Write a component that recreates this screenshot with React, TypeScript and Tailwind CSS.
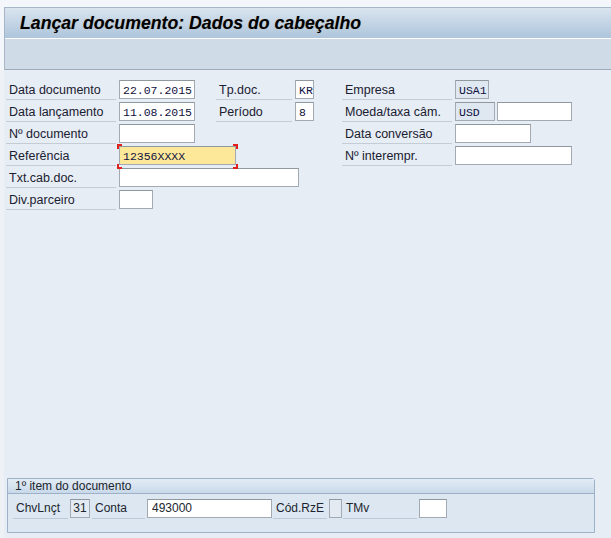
import React from "react";

type FieldProps = {
  w: number;
  value?: string;
  tone?: "white" | "blue" | "yellow" | "grey";
  mono?: boolean;
};

const widthClass: Record<number, string> = {
  19: "w-[19px]",
  34: "w-[34px]",
  40: "w-[40px]",
  75: "w-[75px]",
  76: "w-[76px]",
  117: "w-[117px]",
  180: "w-[180px]",
};

function Field({ w, value = "", tone = "white", mono = true }: FieldProps) {
  const bg =
    tone === "blue"
      ? "bg-[#dfe8f1]"
      : tone === "yellow"
      ? "bg-[#fde89a]"
      : tone === "grey"
      ? "bg-[#e3eaf1]"
      : "bg-white";
  return (
    <div
      className={[
        "mt-[1px] h-[19px] shrink-0 overflow-hidden border border-[#a3aab3] border-t-[#8f979f] pl-[3px] pt-[1px] text-[#101040] leading-[17px]",
        widthClass[w],
        bg,
        mono
          ? "font-['Liberation_Mono',monospace] text-[11.5px]"
          : "text-[12px]",
      ].join(" ")}
    >
      {value}
    </div>
  );
}

function Label({ text, w }: { text: string; w: "lg" | "sm" }) {
  return (
    <div
      className={[
        "mr-[3px] h-[21px] shrink-0 border-b border-[#c4ccd5] pl-[3px] pt-[2px] text-[12.5px] leading-[18px] text-[#1b2030] whitespace-nowrap",
        w === "lg" ? "w-[110px]" : "w-[76px]",
      ].join(" ")}
    >
      {text}
    </div>
  );
}

function Corner({ pos }: { pos: string }) {
  return <span className={`absolute h-[5px] w-[5px] border-[#e0201a] ${pos}`} />;
}

function GroupLabel({ text, className }: { text: string; className: string }) {
  return (
    <div
      className={`mr-[2px] h-[21px] shrink-0 border-b border-[#bccad8] pl-[3px] pt-[1px] text-[12px] leading-[19px] text-[#20252d] ${className}`}
    >
      {text}
    </div>
  );
}

function GroupField({ className, value = "" }: { className: string; value?: string }) {
  return (
    <div
      className={`mt-[1px] h-[19px] shrink-0 border border-[#a3aab3] border-t-[#8f979f] text-[12px] leading-[17px] text-[#20252d] ${className}`}
    >
      {value}
    </div>
  );
}

export default function App() {
  return (
    <div className="flex h-[538px] w-[611px] flex-col overflow-hidden bg-[#f3f6fa] font-['Liberation_Sans',Arial,sans-serif]">
      <div className="h-[7px] shrink-0" />
      <div className="ml-[4px] shrink-0 border-l border-t border-[#a8b7c8]">
        <div className="flex h-[30px] items-center bg-gradient-to-b from-[#d9e4ef] to-[#aec5db] pl-[15px]">
          <h1 className="text-[17.7px] font-bold italic text-black [text-shadow:0_0_1px_rgba(120,70,0,0.35)]">
            Lançar documento: Dados do cabeçalho
          </h1>
        </div>
        <div className="h-[32px] border-t border-white border-b border-b-[#9eaab7] bg-[#cfdbe6]" />
      </div>

      <div className="flex flex-1 flex-col border-l-[4px] border-[#eef2f7] bg-[#e6edf5] pl-[2px] pt-[9px]">
        <div className="flex h-[22px]">
          <Label text="Data documento" w="lg" />
          <Field w={76} value="22.07.2015" />
          <div className="w-[21px] shrink-0" />
          <Label text="Tp.doc." w="sm" />
          <Field w={19} value="KR" />
          <div className="w-[28px] shrink-0" />
          <Label text="Empresa" w="lg" />
          <Field w={34} value="USA1" tone="blue" />
        </div>
        <div className="flex h-[22px]">
          <Label text="Data lançamento" w="lg" />
          <Field w={76} value="11.08.2015" />
          <div className="w-[21px] shrink-0" />
          <Label text="Período" w="sm" />
          <Field w={19} value="8" />
          <div className="w-[28px] shrink-0" />
          <Label text="Moeda/taxa câm." w="lg" />
          <Field w={40} value="USD" tone="blue" />
          <div className="w-[2px] shrink-0" />
          <Field w={75} />
        </div>
        <div className="flex h-[22px]">
          <Label text="Nº documento" w="lg" />
          <Field w={76} />
          <div className="w-[147px] shrink-0" />
          <Label text="Data conversão" w="lg" />
          <Field w={76} />
        </div>
        <div className="flex h-[22px]">
          <Label text="Referência" w="lg" />
          <div className="relative shrink-0">
            <Field w={117} value="12356XXXX" tone="yellow" />
            <Corner pos="-left-[2px] -top-[1px] border-l-2 border-t-2" />
            <Corner pos="-right-[2px] -top-[1px] border-r-2 border-t-2" />
            <Corner pos="-left-[2px] -bottom-[2px] border-l-2 border-b-2" />
            <Corner pos="-right-[2px] -bottom-[2px] border-r-2 border-b-2" />
          </div>
          <div className="w-[106px] shrink-0" />
          <Label text="Nº interempr." w="lg" />
          <Field w={117} />
        </div>
        <div className="flex h-[22px]">
          <Label text="Txt.cab.doc." w="lg" />
          <Field w={180} />
        </div>
        <div className="flex h-[22px]">
          <Label text="Div.parceiro" w="lg" />
          <Field w={34} />
        </div>

        <div className="mb-[5px] mr-[16px] mt-auto ml-[1px] rounded-tr-[3px] border border-[#9db2c9] bg-[#dce7f2]">
          <div className="h-[15px] border-b border-[#9db2c9] bg-gradient-to-b from-[#e3ecf5] to-[#c9d9ea] pl-[7px] text-[12px] leading-[15px] text-[#20252d]">
            1º item do documento
          </div>
          <div className="flex h-[38px] pl-[5px] pt-[4px]">
            <GroupLabel text="ChvLnçt" className="w-[55px]" />
            <GroupField className="w-[20px] bg-[#e3eaf1] text-center" value="31" />
            <div className="w-[2px] shrink-0" />
            <GroupLabel text="Conta" className="w-[53px]" />
            <GroupField className="w-[125px] bg-white pl-[4px]" value="493000" />
            <div className="w-[1px] shrink-0" />
            <GroupLabel text="Cód.RzE" className="w-[54px]" />
            <GroupField className="w-[13px] bg-[#e3eaf1]" />
            <div className="w-[1px] shrink-0" />
            <GroupLabel text="TMv" className="w-[74px]" />
            <GroupField className="w-[28px] bg-white" />
          </div>
        </div>
      </div>
    </div>
  );
}
